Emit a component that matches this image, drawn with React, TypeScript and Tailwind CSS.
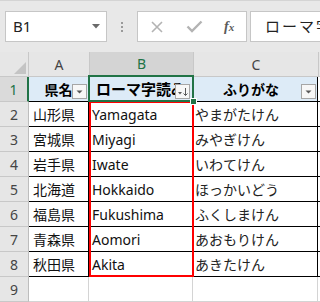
import React from "react";

const GREEN = "#217346";

const rows: [string, string, string][] = [
  ["山形県", "Yamagata", "やまがたけん"],
  ["宮城県", "Miyagi", "みやぎけん"],
  ["岩手県", "Iwate", "いわてけん"],
  ["北海道", "Hokkaido", "ほっかいどう"],
  ["福島県", "Fukushima", "ふくしまけん"],
  ["青森県", "Aomori", "あおもりけん"],
  ["秋田県", "Akita", "あきたけん"],
];

const uiFont = { fontFamily: '"Noto Sans", "Open Sans", sans-serif' };
const cellFont = { fontFamily: '"Noto Sans", "Noto Sans CJK JP", sans-serif' };

function FilterButton({ sorted, className }: { sorted?: boolean; className: string }) {
  return (
    <div
      className={`absolute w-[15px] h-[15px] bg-[#f7f7f7] border border-[#a6a6a6] ${className}`}
    >
      <svg width="13" height="13" viewBox="0 0 13 13" className="block">
        {sorted ? (
          <>
            <polygon points="2,7 6,7 4,9.5" fill="#595959" />
            <line x1="9.5" y1="3" x2="9.5" y2="10.5" stroke="#595959" strokeWidth="1" />
            <polyline points="7.5,8.5 9.5,10.5 11.5,8.5" fill="none" stroke="#595959" strokeWidth="1" />
          </>
        ) : (
          <polygon points="3.5,5.5 9.5,5.5 6.5,8.5" fill="#595959" />
        )}
      </svg>
    </div>
  );
}

function RowHeader({ n, active }: { n: number; active?: boolean }) {
  return (
    <div
      className={`w-[29px] shrink-0 flex items-center justify-center text-[14px] border-b border-[#c8c8c8] ${
        active
          ? "bg-[#dadada] text-[#217346] border-r-2 border-r-[#217346]"
          : "bg-[#e6e6e6] text-[#444444] border-r border-r-[#bdbdbd]"
      }`}
      style={uiFont}
    >
      {n}
    </div>
  );
}

export default function App() {
  return (
    <div className="w-[320px] h-[302px] overflow-hidden bg-white">
      {/* name box + formula bar */}
      <div className="h-[52px] bg-[#e8e8e8] border-t border-[#d4d4d4] flex items-start pt-[10px]">
        <div className="ml-[5px] w-[102px] h-[31px] shrink-0 bg-white border border-[#c6c6c6] flex items-center justify-between pl-[7px] pr-[6px]">
          <span className="text-[15px] text-[#222222]" style={uiFont}>
            B1
          </span>
          <svg width="8" height="5" viewBox="0 0 8 5">
            <polygon points="0,0 8,0 4,4.5" fill="#6a6a6a" />
          </svg>
        </div>
        <div className="w-[30px] h-[31px] shrink-0 flex flex-col items-center justify-center gap-[2px]">
          <div className="w-[2px] h-[2px] bg-[#9a9a9a]" />
          <div className="w-[2px] h-[2px] bg-[#9a9a9a]" />
          <div className="w-[2px] h-[2px] bg-[#9a9a9a]" />
        </div>
        <div className="w-[110px] h-[31px] shrink-0 bg-white border border-[#c6c6c6] flex items-center">
          <svg width="12" height="12" viewBox="0 0 12 12" className="ml-[13px]">
            <path d="M1 1 L11 11 M11 1 L1 11" stroke="#b3b3b3" strokeWidth="1.6" />
          </svg>
          <svg width="17" height="13" viewBox="0 0 17 13" className="ml-[23px]">
            <polyline points="1.5,6.5 6,11 15.5,1.5" fill="none" stroke="#b3b3b3" strokeWidth="2.4" />
          </svg>
          <span
            className="ml-[21px] text-[14px] italic font-bold text-[#5a5a5a] leading-none"
            style={{ fontFamily: '"Liberation Serif", serif' }}
          >
            f<span className="text-[11px]">x</span>
          </span>
        </div>
        <div className="ml-[3px] w-[100px] h-[31px] shrink-0 bg-white border border-[#c6c6c6] flex items-center pl-[14px] overflow-hidden">
          <span className="text-[15px] text-[#222222] whitespace-nowrap tracking-[2px]" style={cellFont}>
            ローマ字読み
          </span>
        </div>
      </div>

      {/* sheet */}
      <div className="relative">
        {/* column headers */}
        <div className="flex h-[25px]">
          <div className="w-[29px] shrink-0 bg-[#e6e6e6] border-r border-b border-[#c8c8c8] relative">
            <svg width="12" height="12" viewBox="0 0 12 12" className="absolute right-[2px] bottom-[2px]">
              <polygon points="12,0 12,12 0,12" fill="#c4c4c4" />
            </svg>
          </div>
          <div
            className="w-[61px] shrink-0 bg-[#e6e6e6] border-r border-b border-[#c8c8c8] flex items-center justify-center text-[14px] text-[#444444]"
            style={uiFont}
          >
            A
          </div>
          <div
            className="w-[104px] shrink-0 bg-[#d4d4d4] border-r border-r-[#c8c8c8] border-b-2 border-b-[#217346] flex items-center justify-center text-[14px] text-[#217346]"
            style={uiFont}
          >
            B
          </div>
          <div
            className="w-[125px] shrink-0 bg-[#e6e6e6] border-r border-b border-[#c8c8c8] flex items-center justify-center text-[14px] text-[#444444]"
            style={uiFont}
          >
            C
          </div>
          <div className="flex-1 bg-[#e6e6e6] border-b border-[#c8c8c8]" />
        </div>

        {/* table header row */}
        <div className="flex h-[25px]">
          <RowHeader n={1} active />
          <div
            className="w-[60px] shrink-0 bg-[#ddebf7] border-r border-b border-black relative flex items-center justify-center text-[14px] font-bold text-black"
            style={cellFont}
          >
            県名
            <FilterButton className="right-[1px] bottom-[2px]" />
          </div>
          <div
            className="w-[104px] shrink-0 bg-[#ddebf7] border-r border-b border-black relative flex items-center pl-[7px] overflow-hidden text-[15px] font-bold text-black whitespace-nowrap"
            style={cellFont}
          >
            ローマ字読み
            <FilterButton sorted className="right-[2px] bottom-[2px]" />
          </div>
          <div
            className="w-[125px] shrink-0 bg-[#ddebf7] border-r border-b border-black relative flex items-center justify-center pr-[8px] text-[14px] font-bold text-black"
            style={cellFont}
          >
            ふりがな
            <FilterButton className="right-[1px] bottom-[2px]" />
          </div>
          <div className="flex-1 border-b border-black" />
        </div>

        {/* data rows */}
        {rows.map(([pref, roman, kana], i) => (
          <div key={roman} className="flex h-[25px]">
            <RowHeader n={i + 2} />
            <div
              className="w-[60px] shrink-0 border-r border-b border-black flex items-center pl-[4px] text-[14px] text-[#111111]"
              style={cellFont}
            >
              {pref}
            </div>
            <div
              className="w-[104px] shrink-0 border-r border-b border-black flex items-center pl-[3px] text-[14px] text-[#111111]"
              style={cellFont}
            >
              {roman}
            </div>
            <div
              className="w-[125px] shrink-0 border-r border-b border-black flex items-center pl-[2px] text-[14px] text-[#222222]"
              style={cellFont}
            >
              {kana}
            </div>
            <div className="flex-1 border-b border-black" />
          </div>
        ))}

        {/* empty row 9 */}
        <div className="flex h-[25px]">
          <RowHeader n={9} />
          <div className="w-[60px] shrink-0 border-r border-b border-[#d4d4d4]" />
          <div className="w-[104px] shrink-0 border-r border-b border-[#d4d4d4]" />
          <div className="w-[125px] shrink-0 border-r border-b border-[#d4d4d4]" />
          <div className="flex-1 border-b border-[#d4d4d4]" />
        </div>

        {/* highlighted range B2:B8 */}
        <div className="absolute left-[89px] top-[49px] w-[105px] h-[176px] border-2 border-[#ff0000] pointer-events-none" />
        {/* active cell B1 */}
        <div
          className="absolute left-[88px] top-[23px] w-[106px] h-[27px] border-2 pointer-events-none"
          style={{ borderColor: GREEN }}
        />
        <div
          className="absolute left-[190px] top-[46px] w-[7px] h-[7px] border border-white pointer-events-none"
          style={{ backgroundColor: GREEN }}
        />
      </div>
    </div>
  );
}
